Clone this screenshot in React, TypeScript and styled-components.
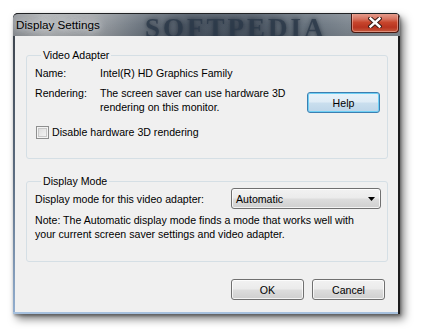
import React from "react";
import styled, { createGlobalStyle } from "styled-components";

const GlobalStyle = createGlobalStyle`
  html, body { margin: 0; padding: 0; background: #ffffff; }
  body { font-family: "Liberation Sans", Arial, sans-serif; color: #000; }
  * { box-sizing: border-box; }
`;

const Desktop = styled.div`
  width: 421px;
  height: 336px;
  padding: 13px 0 0 13px;
  background: #ffffff;
  overflow: hidden;
`;

const Window = styled.div`
  position: relative;
  width: 387px;
  height: 301px;
  display: flex;
  flex-direction: column;
  padding: 0 2px 2px 2px;
  border-radius: 5px 5px 0 0;
  background:
    linear-gradient(#1c1c1e, #1c1c1e) right top / 2px 100% no-repeat,
    linear-gradient(#a7c1de, #a7c1de) left bottom / 100% 2px no-repeat,
    linear-gradient(#3a4048, #5d6e82 55%, #93afd0) left top / 2px 100% no-repeat,
    #3a4048;
  box-shadow: 4px 5px 9px rgba(0, 0, 0, 0.5), 1px 2px 3px rgba(0, 0, 0, 0.35);
`;

const TitleBar = styled.div`
  position: relative;
  height: 23px;
  margin: 0 -2px;
  display: flex;
  align-items: flex-start;
  overflow: hidden;
  border-radius: 5px 5px 0 0;
  border-top: 1px solid #202224;
  background:
    linear-gradient(to bottom, rgba(255,255,255,0.12), rgba(255,255,255,0) 50%, rgba(0,0,0,0.08)),
    linear-gradient(90deg, #8d9196 0%, #aeb1b4 8%, #a2a6aa 20%, #6e7781 33%, #4b5663 45%, #4c5764 62%, #6a7580 76%, #7d868f 86%, #858c94 100%);
`;

const Watermark = styled.span`
  position: absolute;
  left: 132px;
  top: 1px;
  font-family: "Liberation Serif", "Times New Roman", serif;
  font-weight: bold;
  font-size: 27px;
  line-height: 26px;
  letter-spacing: 3px;
  white-space: nowrap;
  color: rgba(44, 58, 74, 0.8);
  text-shadow: 0 0 4px rgba(30, 40, 52, 0.7);
  filter: blur(0.6px);
  pointer-events: none;
`;

const Title = styled.span`
  position: relative;
  margin-left: 3px;
  font-size: 11.7px;
  line-height: 22px;
  color: #000;
  text-shadow: 0 0 6px rgba(230, 232, 235, 0.9), 0 0 10px rgba(220, 222, 226, 0.8);
`;

const CloseButton = styled.div`
  position: relative;
  margin-left: auto;
  margin-right: 1px;
  margin-top: -1px;
  width: 48px;
  height: 20px;
  display: flex;
  align-items: center;
  justify-content: center;
  border: 1px solid #4a1810;
  border-top: none;
  border-radius: 0 0 4px 4px;
  background: linear-gradient(to bottom, #e7a495 0%, #d87562 30%, #c7452c 50%, #b83420 75%, #c65a3e 100%);
  box-shadow: inset 0 0 0 1px rgba(255, 210, 200, 0.45);
`;

const Client = styled.div`
  flex: 1;
  display: flex;
  flex-direction: column;
  background: #f0f0f0;
  padding: 12px 10px 12px 11px;
  font-size: 10.6px;
  line-height: 14px;
`;

const Group = styled.fieldset<{ $pb: number; $mt?: number }>`
  margin: ${(p) => p.$mt ?? 0}px 0 0 0;
  padding: 0 0 ${(p) => p.$pb}px 8px;
  min-width: 0;
  border: 1px solid #d5dfe5;
  border-radius: 3px;
`;

const Legend = styled.legend`
  margin-left: 6px;
  padding: 0 2px;
  line-height: 14px;
  color: #000;
`;

const Row = styled.div<{ $mt?: number }>`
  display: flex;
  align-items: flex-start;
  margin-top: ${(p) => p.$mt ?? 0}px;
  white-space: nowrap;
`;

const Label = styled.span`
  width: 65px;
  flex: none;
`;

const Value = styled.span`
  flex: 1;
`;

const Button = styled.div<{ $default?: boolean }>`
  width: 73px;
  height: 21px;
  flex: none;
  display: flex;
  align-items: center;
  justify-content: center;
  border-radius: 3px;
  border: 1px solid ${(p) => (p.$default ? "#3c7fb1" : "#707070")};
  background: ${(p) =>
    p.$default
      ? "linear-gradient(to bottom, #e8f3fa 0%, #dfecf6 48%, #cadfee 52%, #bdd5e8 100%)"
      : "linear-gradient(to bottom, #f2f2f2 0%, #ebebeb 48%, #dddddd 52%, #cfcfcf 100%)"};
  box-shadow: ${(p) =>
    p.$default ? "inset 0 0 0 1px #6fd0f5" : "inset 0 0 0 1px rgba(255,255,255,0.75)"};
  font-size: 10.6px;
  color: #000;
`;

const HelpButton = styled(Button)`
  margin: 6px 7px 0 auto;
`;

const CheckRow = styled.div`
  display: flex;
  align-items: center;
  gap: 3px;
  margin-top: 11px;
  margin-left: 1px;
  height: 14px;
`;

const CheckBox = styled.span`
  width: 13px;
  height: 13px;
  flex: none;
  border: 1px solid #8e8f8f;
  background: linear-gradient(135deg, #d8d8d8 0%, #e8e8e8 50%, #f8f8f8 100%);
  box-shadow: inset 0 0 0 1px #f4f4f4, inset 0 0 0 2px #c9c9c9;
`;

const ModeRow = styled.div`
  display: flex;
  align-items: center;
  height: 21px;
  white-space: nowrap;
`;

const Select = styled.div`
  width: 150px;
  height: 21px;
  margin-left: auto;
  margin-right: 6px;
  display: flex;
  align-items: center;
  padding: 0 5px 0 4px;
  border: 1px solid #707070;
  border-radius: 3px;
  background: linear-gradient(to bottom, #f2f2f2 0%, #ebebeb 48%, #dddddd 52%, #cfcfcf 100%);
  box-shadow: inset 0 0 0 1px rgba(255,255,255,0.75);
`;

const SelectText = styled.span`
  flex: 1;
`;

const Note = styled.div`
  margin-top: 5px;
  line-height: 13.5px;
  white-space: nowrap;
`;

const ButtonRow = styled.div`
  display: flex;
  justify-content: flex-end;
  gap: 8px;
  margin-top: 17px;
  padding-right: 3px;
`;

export default function App() {
  return (
    <>
      <GlobalStyle />
      <Desktop>
        <Window>
          <TitleBar>
            <Watermark>SOFTPEDIA</Watermark>
            <Title>Display Settings</Title>
            <CloseButton>
              <svg width="14" height="11" viewBox="0 0 14 11">
                <path d="M2.5 1.5 L11.5 9.5 M11.5 1.5 L2.5 9.5" stroke="#3a1a14" strokeWidth="4.4" strokeLinecap="square" />
                <path d="M2.5 1.5 L11.5 9.5 M11.5 1.5 L2.5 9.5" stroke="#ffffff" strokeWidth="2.4" strokeLinecap="square" />
              </svg>
            </CloseButton>
          </TitleBar>
          <Client>
            <Group $pb={19}>
              <Legend>Video Adapter</Legend>
              <Row $mt={4}>
                <Label>Name:</Label>
                <Value>Intel(R) HD Graphics Family</Value>
              </Row>
              <Row $mt={6}>
                <Label>Rendering:</Label>
                <Value>
                  The screen saver can use hardware 3D
                  <br />
                  rendering on this monitor.
                </Value>
                <HelpButton $default>Help</HelpButton>
              </Row>
              <CheckRow>
                <CheckBox />
                <span>Disable hardware 3D rendering</span>
              </CheckRow>
            </Group>
            <Group $pb={20} $mt={15}>
              <Legend>Display Mode</Legend>
              <ModeRow>
                <span>Display mode for this video adapter:</span>
                <Select>
                  <SelectText>Automatic</SelectText>
                  <svg width="7" height="4" viewBox="0 0 7 4">
                    <path d="M0 0 H7 L3.5 4 Z" fill="#000" />
                  </svg>
                </Select>
              </ModeRow>
              <Note>
                Note: The Automatic display mode finds a mode that works well with
                <br />
                your current screen saver settings and video adapter.
              </Note>
            </Group>
            <ButtonRow>
              <Button>OK</Button>
              <Button>Cancel</Button>
            </ButtonRow>
          </Client>
        </Window>
      </Desktop>
    </>
  );
}
